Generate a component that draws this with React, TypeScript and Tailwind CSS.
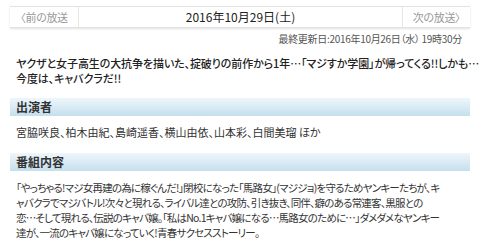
import React from "react";

const font = {
  fontFamily: '"Noto Sans CJK JP", "Noto Sans", sans-serif',
};

const SectionHeader: React.FC<{ title: string }> = ({ title }) => (
  <div className="mx-[10px] flex h-[18px] items-center bg-gradient-to-b from-[#eef6fb] via-[#d9ebf5] to-[#c6dfed] pl-[6px] text-[12px] font-bold leading-none text-[#333]">
    {title}
  </div>
);

export default function App() {
  return (
    <div
      className="h-[249px] w-[480px] overflow-hidden bg-white text-[#333] [font-feature-settings:'palt']"
      style={font}
    >
      <div className="pt-[6px]">
        <div className="mx-[10px] flex h-[22px] items-center border-y border-[#e2e2e2] bg-white shadow-[0_1px_2px_rgba(0,0,0,0.12)]">
          <div className="flex h-full w-[69px] items-center justify-center border-r border-[#e6e6e6] text-[11px] tracking-[-0.3px] text-[#999]">
            〈前の放送
          </div>
          <div className="flex-1 text-center text-[12px] text-[#222]">
            2016年10月29日(土)
          </div>
          <div className="flex h-full w-[68px] items-center justify-center border-l border-[#e6e6e6] text-[11px] tracking-[-0.3px] text-[#999]">
            次の放送〉
          </div>
        </div>
      </div>

      <div className="mr-[18px] mt-[5px] text-right text-[10px] leading-[12px] tracking-[-0.3px] text-[#555]">
        最終更新日:2016年10月26日（水） 19時30分
      </div>

      <div className="ml-[16px] mt-[11px] whitespace-nowrap text-[11px] font-medium leading-[15px] tracking-[-0.1px] text-[#222]">
        ヤクザと女子高生の大抗争を描いた、掟破りの前作から1年…「マジすか学園」が帰ってくる!!しかも…
        <br />
        今度は、キャバクラだ!!
      </div>

      <div className="mt-[12px]">
        <SectionHeader title="出演者" />
      </div>
      <div className="ml-[16px] mt-[9px] text-[11px] leading-[15px] text-[#333]">
        宮脇咲良、柏木由紀、島崎遥香、横山由依、山本彩、白間美瑠 ほか
      </div>

      <div className="mt-[13px]">
        <SectionHeader title="番組内容" />
      </div>
      <div className="ml-[16px] mt-[9px] whitespace-nowrap text-[10.5px] leading-[15px] tracking-[-0.78px] text-[#333]">
        「やっちゃる!マジ女再建の為に稼ぐんだ!」閉校になった「馬路女」(マジジョ)を守るためヤンキーたちが、キ
        <br />
        ャバクラでマジバトル!次々と現れる、ライバル達との攻防、引き抜き、同伴、癖のある常連客、黒服との
        <br />
        恋…そして現れる、伝説のキャバ嬢。「私はNo.1キャバ嬢になる…馬路女のために…」ダメダメなヤンキー
        <br />
        達が、一流のキャバ嬢になっていく!青春サクセスストーリー。
      </div>
    </div>
  );
}
